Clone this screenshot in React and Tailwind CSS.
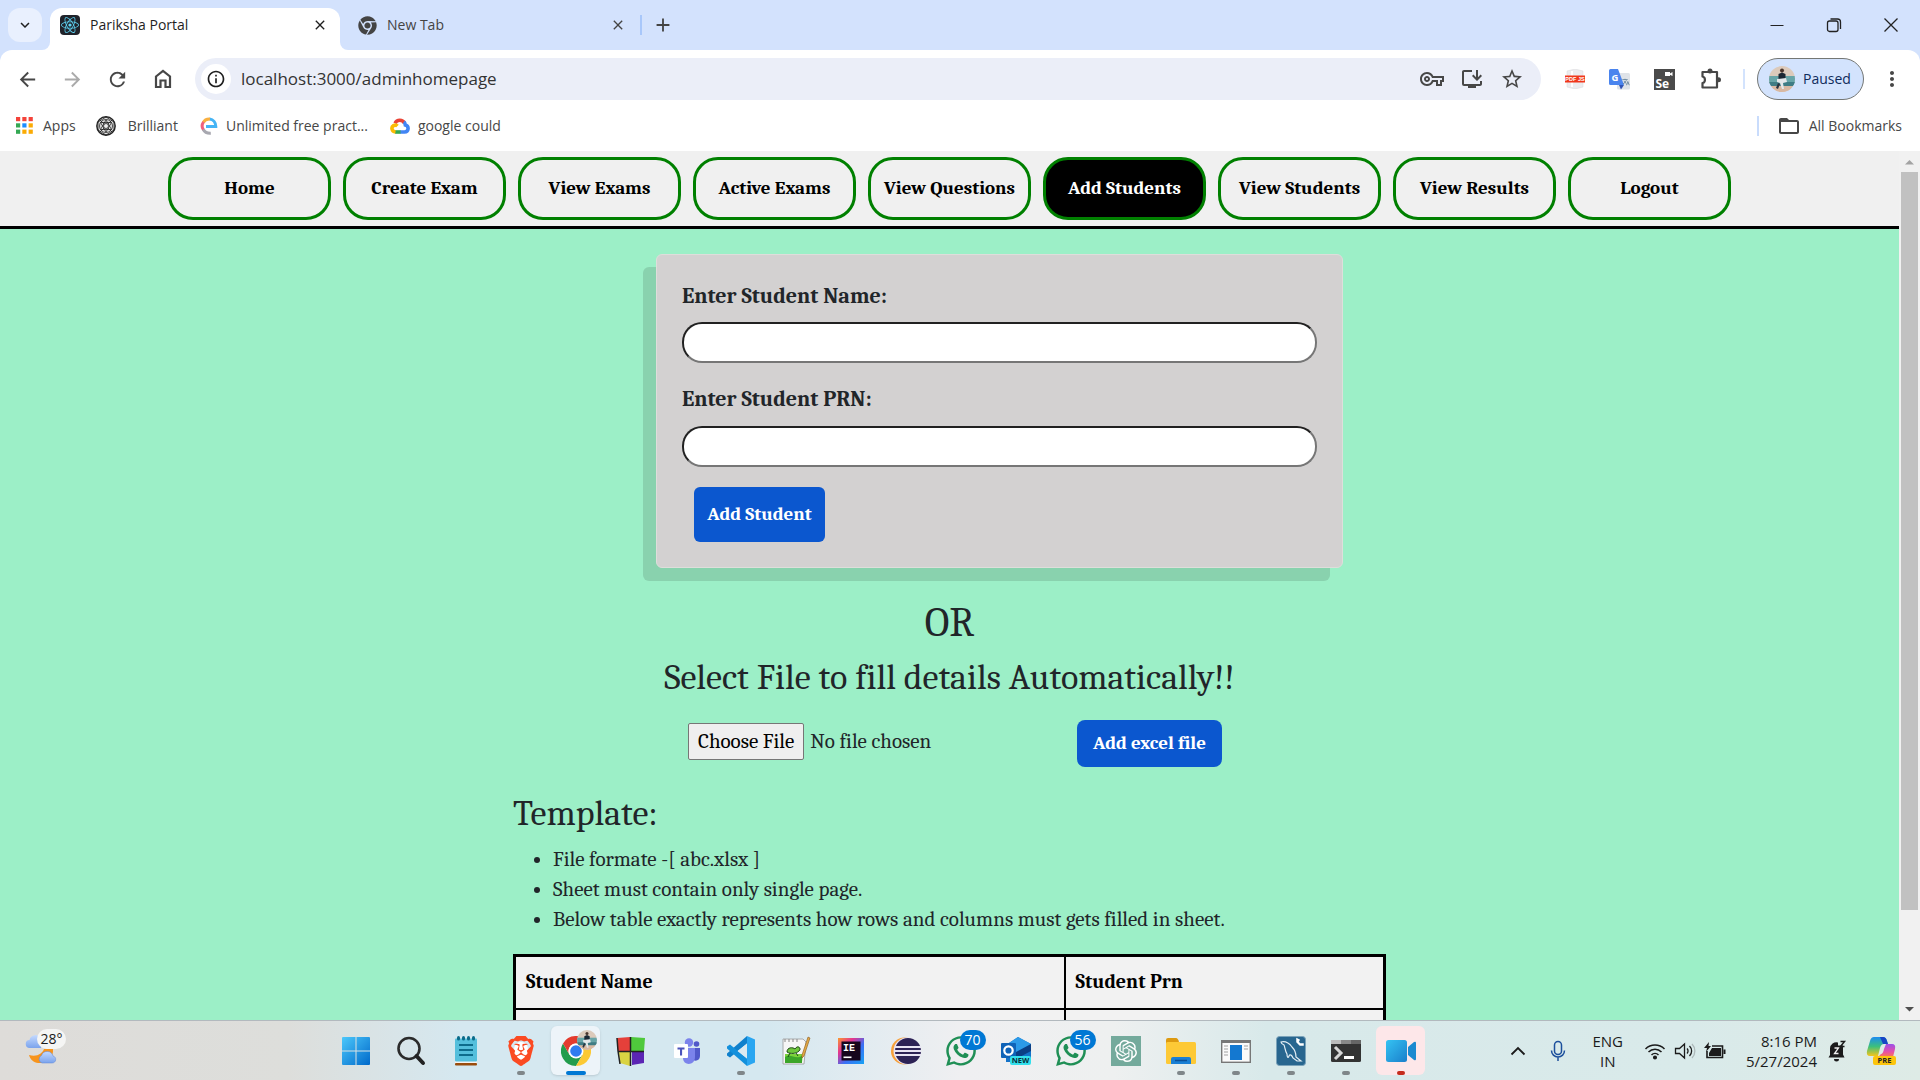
import React from "react";
import {
  MdOutlineVpnKey, MdInstallDesktop, MdStarBorder, MdArrowBack, MdArrowForward,
  MdRefresh, MdMoreVert, MdFolderOpen, MdInfoOutline, MdExpandMore, MdClose, MdAdd, MdTranslate,
} from "react-icons/md";
import { FaReact, FaWhatsapp, FaChrome } from "react-icons/fa";
import { SiBrave, SiOpenai } from "react-icons/si";

const HomeIcon = () => (
  <svg viewBox="0 0 24 24" className="size-6" fill="none" stroke="#474747" strokeWidth="2.2">
    <path d="M5 9.500 12 4l7 5.500V20h-4.500v-6.500h-5V20H5z" />
  </svg>
);

const PuzzleIcon = () => (
  <svg viewBox="0 0 24 24" className="size-6" fill="none" stroke="#474747" strokeWidth="2.2" strokeLinejoin="round">
    <path d="M3.500 5H18v15.500H3.500V16c3-.5 3.500-5.500 0-6.500z" />
    <circle cx="11" cy="4" r="2.500" fill="#474747" stroke="none" />
    <circle cx="19.500" cy="12.800" r="2.500" fill="#474747" stroke="none" />
  </svg>
);

const AppsIcon = () => (
  <svg viewBox="0 0 17 17" className="size-[17px]">
    {["#f4433a", "#f4433a", "#f4433a", "#34a853", "#1a8cff", "#fbab04", "#34a853", "#fbab04", "#fbab04"].map((c, i) => (
      <rect key={i} x={(i % 3) * 6.3} y={Math.floor(i / 3) * 6.3} width="4.2" height="4.2" fill={c} />
    ))}
  </svg>
);

const BrilliantIcon = () => (
  <svg viewBox="0 0 20 20" className="size-5" fill="none" stroke="#222" strokeWidth=".8">
    <circle cx="10" cy="10" r="9.2" fill="#e4e4e4" strokeWidth="1.4" />
    <circle cx="10" cy="10" r="6.5" />
    <path d="M10 1 18 6v8l-8 5-8-5V6zM10 4l5.500 9.500h-11zM10 16 4.500 6.500h11zM3.500 3.500l13 13M16.500 3.500l-13 13" />
    <circle cx="10" cy="10" r="2.500" fill="#eee" />
  </svg>
);

const EIcon = () => (
  <svg viewBox="0 0 18 20" className="h-5 w-[18px]" fill="none" strokeWidth="3">
    <path d="M6 10.500h9.800c0-4-2.500-7-6.300-7.500" stroke="#45b4f5" />
    <path d="M10 3C7 2.800 4.500 4 3.300 6.500" stroke="#f9b040" />
    <path d="M3.500 6A7 7 0 0 0 3.500 14" stroke="#f0607c" />
    <path d="M3.300 13.500c1.500 3 4 4 7.500 3.800" stroke="#a8a8b0" />
  </svg>
);

const CloudIcon = () => (
  <svg viewBox="0 0 20 16" className="h-4 w-5" fill="none" strokeWidth="3.6">
    <path d="M5 5.200A5.400 5.400 0 0 1 14.500 5" stroke="#ea4335" />
    <path d="M13.800 4c1.400 1 1.300 2 1.500 3 4 1 3.600 7-.8 7H10" stroke="#4285f4" />
    <path d="M10.500 14H5" stroke="#34a853" />
    <path d="M5.500 14C1.500 13.500 1 9 3.500 7.600c1.500-.8 3-.6 4 .4" stroke="#fbbc04" />
  </svg>
);

const PdfIcon = () => (
  <svg viewBox="0 0 20 20" className="size-5">
    <path d="M2 2 10 0l8 2v16l-8 2-8-2z" fill="#ececef" stroke="#d8d8da" strokeWidth=".5" />
    <path d="M7 2v16" stroke="#fff" strokeWidth="2" />
    <rect x="0" y="6.500" width="20" height="7" fill="#f0371c" />
    <text x="10" y="12.300" fontSize="5.500" fontWeight="bold" fill="#fff" textAnchor="middle" fontFamily="Liberation Sans, sans-serif">PDF JS</text>
  </svg>
);

const TranslateIcon = () => (
  <div className="relative size-[21px]">
    <svg viewBox="0 0 21 21" className="size-[21px]">
      <rect x="8" y="4" width="13" height="16.500" rx="1.500" fill="#dfe3e8" />
      <path d="M10 16h5l-3 4.500z" fill="#3254b5" />
      <path d="M1.500 0H9l6 16H1.500A1.500 1.500 0 0 1 0 14.500v-13A1.500 1.500 0 0 1 1.500 0z" fill="#4a84ee" />
      <text x="6" y="11.500" fontSize="9.500" fontWeight="bold" fill="#fff" textAnchor="middle" fontFamily="Open Sans, sans-serif">G</text>
    </svg>
    <MdTranslate className="absolute bottom-1 right-0 size-2 text-[#5d7d96]" />
  </div>
);

const SeIcon = () => (
  <svg viewBox="0 0 21 21" className="size-[21px]">
    <rect width="21" height="21" fill="#4a4a4a" />
    <text x="1.500" y="18.500" fontSize="12" fontWeight="bold" fill="#fff" fontFamily="Open Sans, sans-serif">Se</text>
    <path d="M11 3h5v1.500l2.500-1.500v4L16 5.800V7h-5z" fill="#fff" />
  </svg>
);

const Avatar = ({ className }) => (
  <svg viewBox="0 0 26 26" className={className}>
    <defs><clipPath id="avatarClip"><circle cx="13" cy="13" r="13" /></clipPath></defs>
    <g clipPath="url(#avatarClip)">
      <rect width="26" height="26" fill="#dccabb" />
      <rect y="10" width="26" height="9" fill="#68a5a8" />
      <path d="M0 16h26v4H0z" fill="#3f7d85" />
      <path d="M0 20h26v6H0z" fill="#d8b8a2" />
      <circle cx="13" cy="4.500" r="2" fill="#4a342b" />
      <path d="M9.500 8 13 6.500 16.500 8v6h-7z" fill="#1c2733" />
      <path d="m8 13 9-1 1 4-4 1 1 6h-2l-2-6-3-1z" fill="#e4e8ea" />
      <path d="m9 17 2 1-2 5-2-1z" fill="#2a3440" />
    </g>
  </svg>
);

const WeatherIcon = () => (
  <svg viewBox="0 0 32 32" className="size-8">
    <defs><linearGradient id="cloudFill" x1="0" y1="0" x2="0" y2="1"><stop offset="0" stopColor="#c3d9ff" /><stop offset="1" stopColor="#7ba3ec" /></linearGradient></defs>
    <path d="M5 13a4 4 0 0 1-.5-8A6 6 0 0 1 16 4v9z" fill="url(#cloudFill)" />
    <path d="M28 14c1 9-7 15-15 14C9 27.500 5 24.500 4 20c8 2 13-1 15-6z" fill="#f7941d" />
    <path d="M17 28a4 4 0 0 1-.5-7.500 6 6 0 0 1 11.500.5c4 1 3.500 7-1 7z" fill="url(#cloudFill)" stroke="#5d86d8" strokeWidth=".5" />
  </svg>
);

const S = ({ children, vb = "0 0 30 30" }) => <svg viewBox={vb} className="size-[30px]">{children}</svg>;

const WindowsIcon = () => (
  <S>
    <defs><linearGradient id="winFill" x1="0" y1="0" x2="1" y2="1"><stop offset="0" stopColor="#4cc8fb" /><stop offset="1" stopColor="#0069ca" /></linearGradient></defs>
    <path d="M2 1h12.500v13.500H1V2a1 1 0 0 1 1-1zM15.500 1H28a1 1 0 0 1 1 1v12.500H15.500zM1 15.500h13.500V29H2a1 1 0 0 1-1-1zM15.500 15.500H29V28a1 1 0 0 1-1 1H15.500z" fill="url(#winFill)" />
  </S>
);
const SearchIcon = () => (
  <S><circle cx="13" cy="12.500" r="10.500" fill="none" stroke="#2b2b2b" strokeWidth="2.600" /><path d="m20.500 20 6.500 7" stroke="#222" strokeWidth="4" strokeLinecap="round" /></S>
);
const NotepadIcon = () => (
  <S>
    <rect x="4" y="27" width="22" height="2.500" rx="1" fill="#9a4c0c" /><rect x="4" y="24" width="22" height="3" fill="#f3f3f3" />
    <rect x="4" y="2.500" width="22" height="23" rx="1" fill="#55bfdc" />
    <g stroke="#0e6c8c" strokeWidth="2"><path d="M8 9h14M8 14h14M8 19h14" /></g>
    {[7.5, 12.5, 17.5, 22.5].map((x) => <rect key={x} x={x - 1.5} y="0" width="3" height="4.500" rx="1.500" fill="#0b6b8a" />)}
  </S>
);
const BraveIcon = () => (
  <div className="relative">
    <span className="absolute inset-x-2 inset-y-1.5 rounded-full bg-white" />
    <SiBrave className="relative size-[30px] text-[#fb4a22]" />
  </div>
);
const ChromeIcon = () => (
  <div className="relative">
    <S vb="0 0 48 48">
      <path d="M13.600 30 3.200 12A24 24 0 0 0 24 48l10.400-18z" fill="#229c4c" />
      <path d="M34.400 30 24 48a24 24 0 0 0 20.800-36H24z" fill="#fcc934" />
      <path d="M44.800 12H24a12 12 0 0 0-10.400 18L3.200 12a24 24 0 0 1 41.600 0z" fill="#e33b2e" />
      <circle cx="24" cy="24" r="12" fill="#fff" /><circle cx="24" cy="24" r="9.300" fill="#2f7cf0" />
    </S>
    <Avatar className="absolute -right-1.5 -top-1.5 size-5" />
  </div>
);
const CubesIcon = () => (
  <S>
    <path d="m1 2 13-1v14H2z" fill="#e5403a" /><path d="m15 1 14 1-1 13H15z" fill="#4fc93c" />
    <path d="M3 16h11v14L4 27z" fill="#d9d343" /><path d="M16 16h12v11l-12 2z" fill="#5b25b4" />
    <path d="m1 2 1 13 2 13M14.500 1v29M2 15.500h26" stroke="#222" strokeWidth="1.500" fill="none" />
  </S>
);
const TeamsIcon = () => (
  <S>
    <circle cx="18" cy="6.500" r="4.200" fill="#7b83eb" /><circle cx="25.500" cy="8" r="2.800" fill="#5059c9" />
    <path d="M21 12h8v8c0 6-8 6-8 1z" fill="#5059c9" /><path d="M12 12h12v9c0 9-12 9-12 1z" fill="#7b83eb" />
    <rect x="3" y="8" width="14" height="14" rx="1" fill="#fff" />
    <path d="M6.500 11.500h7v2h-2.400v6H9v-6H6.500z" fill="#4b53bc" />
  </S>
);
const CodeIcon = () => (
  <S>
    <path d="m21 7.500-17 14-3-2v-2L21 0z" fill="#0f80cc" /><path d="M21 22.500 4 8.500l-3 2v2L21 30z" fill="#1390dc" />
    <path d="m21 0 8 3.500v23L21 30z" fill="#2aa6f1" /><path d="m21 7.500-9.500 7.500 9.500 7.500z" fill="#dbeaf1" />
  </S>
);
const NppIcon = () => (
  <S>
    <path d="M2 3h20l3 3-2 22H2z" fill="#f6f6f6" stroke="#999" strokeWidth=".8" />
    <path d="M4 18h18l-1 8H4z" fill="#7bd23c" /><path d="M4 21c6-4 10 3 17-1v7H4z" fill="#3ba629" />
    <path d="M6 16c0-5 6-5 8-3 3-5 7 0 4 2-3 3-9 3-12 1zm3 1-2 4m8-4 2 3" fill="#6fc73d" stroke="#1f4a18" strokeWidth="1" />
    <path d="m27 1 2 1-6 18-2 2v-3z" fill="#e3a844" stroke="#8a5a1c" strokeWidth=".6" />
    <path d="M4 3v3M8 3v3M12 3v3M16 3v3" stroke="#888" />
  </S>
);
const IdeaIcon = () => (
  <S>
    <defs><linearGradient id="ideaFill" x1="0" y1="0" x2="1" y2="1"><stop offset="0" stopColor="#fc9a2e" /><stop offset=".3" stopColor="#e4348f" /><stop offset=".6" stopColor="#3b6ff5" /><stop offset="1" stopColor="#17a3f4" /></linearGradient></defs>
    <rect x="2" y="2" width="26" height="26" fill="url(#ideaFill)" /><rect x="5.500" y="5.500" width="19" height="19" fill="#16061c" />
    <text x="7" y="15" fontSize="10" fontWeight="bold" fill="#fff" fontFamily="Liberation Mono, monospace">IE</text>
    <rect x="7.500" y="20.500" width="8" height="1.600" fill="#fff" />
  </S>
);
const EclipseIcon = () => (
  <S>
    <circle cx="13.500" cy="15" r="13.500" fill="#f7a13a" /><circle cx="16" cy="15" r="13.500" fill="#e8e3f3" /><circle cx="17" cy="15" r="13" fill="#2c2255" />
    <path d="M4 11h26M4 15h26M4 19h26" stroke="#e7e3f2" strokeWidth="1.800" />
  </S>
);
const Whatsapp = ({ count }) => (
  <div className="relative">
    <FaWhatsapp className="size-[34px] text-[#1f8f55]" />
    <span className="absolute -right-2 -top-1 flex h-5 w-[26px] items-center justify-center rounded-full bg-[#0078d4] text-sm text-white">{count}</span>
  </div>
);
const OutlookIcon = () => (
  <S>
    <path d="M5 9 17 1l13 7v18H5z" fill="#1473c9" /><path d="M5 9 17 1l13 7-14 9z" fill="#2c9ae8" /><path d="m15 16 15-8v7l-15 8z" fill="#0b3f85" />
    <rect x="0" y="7" width="15" height="15" rx="1" fill="#0f63b8" />
    <circle cx="7.500" cy="14.500" r="4.200" fill="none" stroke="#fff" strokeWidth="2.200" />
    <rect x="9" y="20" width="21" height="9" rx="2" fill="#33e0ec" />
    <text x="19.500" y="27.200" fontSize="7.500" fontWeight="bold" textAnchor="middle" fill="#06303c" fontFamily="Open Sans, sans-serif">NEW</text>
  </S>
);
const GptIcon = () => <div className="flex size-[30px] items-center justify-center bg-[#74aa9c]"><SiOpenai className="size-[22px] text-white" /></div>;
const ExplorerIcon = () => (
  <S>
    <path d="M0 4a2 2 0 0 1 2-2h8q2 0 3 4v3H0z" fill="#dd9a10" /><rect x="0" y="6" width="30" height="22" rx="1.500" fill="#fdc936" />
    <path d="M5 28v-5a2 2 0 0 1 2-2h16a2 2 0 0 1 2 2v5z" fill="#1a7fd4" /><path d="M9 24.500h12" stroke="#0b4f96" strokeWidth="1.500" />
  </S>
);
const PanelIcon = () => (
  <S>
    <rect x=".7" y="4.700" width="28.600" height="21.600" fill="#fafafa" stroke="#777" strokeWidth="1.400" /><rect x="0" y="4" width="30" height="3" fill="#777" />
    <g stroke="#a0a0a0"><path d="M3 10h4M3 13h4M3 16h4M3 19h4M23 10h4M23 13h4" /></g><rect x="9" y="9" width="12" height="15" fill="#1478d0" />
  </S>
);
const MysqlIcon = () => (
  <S>
    <rect x=".5" y=".5" width="29" height="29" rx="3" fill="#28668f" stroke="#7ba3ba" />
    <path d="M5 6c4-1 8 1 11 5 3 3 4 7 4 10l5 4h-4l-4-3c-1-3-3-4-4-2-1 3-2 1-2-2-2-3-2-7-3-9C6 8 5 7 5 6z" fill="none" stroke="#e3eef4" strokeWidth="1.200" />
    <path d="m21 3 2 1-1 2 2 2h3v1h-3l-3-3z" stroke="#fff" strokeWidth="1.500" fill="none" />
  </S>
);
const TerminalIcon = () => (
  <S>
    <rect x="0" y="4" width="30" height="22" rx="1.500" fill="#333" /><path d="M0 4h10v4H0z" fill="#bbb" /><path d="M10 4h10v4H10z" fill="#888" /><path d="M20 4h10v4H20z" fill="#666" />
    <path d="m4 11 6 6-6 6" stroke="#d8d8d8" strokeWidth="3" fill="none" /><path d="M13 21.500h10" stroke="#fff" strokeWidth="3" />
  </S>
);
const CameraIcon = () => (
  <S>
    <defs><linearGradient id="camFill" x1="0" y1="0" x2="1" y2="1"><stop offset="0" stopColor="#35c3f3" /><stop offset="1" stopColor="#1a7fcb" /></linearGradient></defs>
    <rect x="0" y="4" width="21" height="22" rx="2.500" fill="url(#camFill)" /><path d="m22 11 6-5q2-1 2 1v16q0 2-2 1l-6-5z" fill="#1b8ad0" />
  </S>
);

const tasks = [
  { name: "Start", icon: <WindowsIcon /> },
  { name: "Search", icon: <SearchIcon /> },
  { name: "Notepad", icon: <NotepadIcon /> },
  { name: "Brave", icon: <BraveIcon />, dot: "w-2 bg-[#7f8689]" },
  { name: "Chrome", icon: <ChromeIcon />, dot: "w-5 bg-[#0078d4]", bg: "bg-[#edf4f9] shadow-sm" },
  { name: "Blocks", icon: <CubesIcon /> },
  { name: "Teams", icon: <TeamsIcon /> },
  { name: "Code", icon: <CodeIcon />, dot: "w-2 bg-[#7f8689]" },
  { name: "Text editor", icon: <NppIcon /> },
  { name: "IDE", icon: <IdeaIcon /> },
  { name: "Eclipse", icon: <EclipseIcon /> },
  { name: "WhatsApp", icon: <Whatsapp count="70" /> },
  { name: "Outlook", icon: <OutlookIcon /> },
  { name: "WhatsApp Web", icon: <Whatsapp count="56" /> },
  { name: "ChatGPT", icon: <GptIcon /> },
  { name: "Explorer", icon: <ExplorerIcon />, dot: "w-2 bg-[#7f8689]" },
  { name: "Window", icon: <PanelIcon />, dot: "w-2 bg-[#7f8689]" },
  { name: "MySQL", icon: <MysqlIcon />, dot: "w-2 bg-[#7f8689]" },
  { name: "Terminal", icon: <TerminalIcon />, dot: "w-2 bg-[#7f8689]" },
  { name: "Recorder", icon: <CameraIcon />, dot: "w-2 bg-[#c42b1c]", bg: "bg-[#fde7e9]" },
];

const navItems = ["Home", "Create Exam", "View Exams", "Active Exams", "View Questions", "Add Students", "View Students", "View Results", "Logout"];

function TabStrip() {
  return (
    <div className="flex h-[50px] items-end bg-[#d3e2fd] text-sm text-[#1f1f1f]">
      <button aria-label="Search tabs" className="mb-2 ml-2 flex size-[34px] items-center justify-center rounded-xl bg-[#e9f0fe]">
        <MdExpandMore className="size-[18px]" />
      </button>
      <div className="size-2 rounded-br-lg shadow-[4px_4px_0_4px_white] [clip-path:inset(0)]" />
      <div className="flex h-[42px] w-[290px] items-center rounded-t-xl bg-white pb-2 pl-2.5 pr-3">
        <span className="flex size-5 items-center justify-center rounded-sm bg-[#20232a]"><FaReact className="size-[18px] text-[#5ed3f3]" /></span>
        <span className="ml-2.5 flex-1">Pariksha Portal</span>
        <button aria-label="Close Pariksha Portal"><MdClose className="size-4" /></button>
      </div>
      <div className="size-2 rounded-bl-lg shadow-[-4px_4px_0_4px_white] [clip-path:inset(0)]" />
      <div className="flex h-[42px] w-[278px] items-center pb-2 pl-2.5 text-[#444]">
        <FaChrome className="size-[19px]" />
        <span className="ml-2.5 flex-1">New Tab</span>
        <button aria-label="Close New Tab"><MdClose className="size-4" /></button>
      </div>
      <div className="mb-[15px] ml-3.5 h-5 w-0.5 bg-[#a8c7fa]" />
      <button aria-label="Open new tab" className="mb-3.5 ml-2.5"><MdAdd className="size-[22px] text-[#444]" /></button>
      <div className="mb-[17px] ml-auto flex items-center gap-[41px] pr-[21px] text-[#222]">
        <button aria-label="Minimise"><svg className="size-4" viewBox="0 0 16 16" stroke="currentColor"><path d="M1.500 8.500h13" /></svg></button>
        <button aria-label="Restore"><svg className="size-4" viewBox="0 0 16 16" fill="none" stroke="currentColor" strokeWidth="1.300"><rect x="1.500" y="4" width="10.500" height="10.500" rx="2" /><path d="M4.500 2h7a3 3 0 0 1 3 3v7" /></svg></button>
        <button aria-label="Close window"><svg className="size-4" viewBox="0 0 16 16" stroke="currentColor" strokeWidth="1.300"><path d="m1.500 1.500 13 13M14.500 1.500l-13 13" /></svg></button>
      </div>
    </div>
  );
}

function Toolbar() {
  return (
    <div className="flex h-[58px] items-center rounded-t-xl bg-white pl-4 text-[#474747]">
      <div className="flex items-center gap-[22px]">
        <button aria-label="Back"><MdArrowBack className="size-[23px]" /></button>
        <button aria-label="Forward"><MdArrowForward className="size-[23px] text-[#aaa]" /></button>
        <button aria-label="Reload"><MdRefresh className="size-[23px]" /></button>
        <button aria-label="Home"><HomeIcon /></button>
      </div>
      <div className="ml-5 flex h-[42px] flex-1 items-center rounded-full bg-[#ebeef8] pl-1.5 pr-[17px]">
        <span className="flex size-[30px] items-center justify-center rounded-full bg-white"><MdInfoOutline className="size-5 text-[#1f1f1f]" /></span>
        <input aria-label="Address" className="ml-2.5 flex-1 bg-transparent text-[17px] text-[#333] outline-none" defaultValue="localhost:3000/adminhomepage" />
        <div className="flex items-center gap-4">
          <button aria-label="Passwords"><MdOutlineVpnKey className="size-6" /></button>
          <button aria-label="Install"><MdInstallDesktop className="size-6" /></button>
          <button aria-label="Bookmark"><MdStarBorder className="size-6" /></button>
        </div>
      </div>
      <div className="ml-6 flex items-center gap-6">
        <PdfIcon /><TranslateIcon /><SeIcon />
        <button aria-label="Extensions"><PuzzleIcon /></button>
      </div>
      <div className="ml-5 h-5 w-0.5 bg-[#d3e3fd]" />
      <button className="ml-3 flex h-[42px] w-[107px] items-center gap-2 rounded-full border border-[#747775] bg-[#d3e3fd] pl-[11px] text-sm text-[#0f2c5c]">
        <Avatar className="size-[26px]" />Paused
      </button>
      <button aria-label="Menu" className="ml-4 mr-4"><MdMoreVert className="size-6" /></button>
    </div>
  );
}

function Bookmarks() {
  return (
    <div className="flex h-[43px] items-center bg-white pb-2 pl-4 pr-[18px] text-sm text-[#474747]">
      <a href="#apps" className="flex items-center gap-2.5"><AppsIcon />Apps</a>
      <a href="#brilliant" className="ml-5 flex items-center gap-3"><BrilliantIcon />Brilliant</a>
      <a href="#unlimited" className="ml-[22px] flex items-center gap-2"><EIcon />Unlimited free pract...</a>
      <a href="#cloud" className="ml-[22px] flex items-center gap-2"><CloudIcon />google could</a>
      <div className="ml-auto h-5 w-0.5 bg-[#c9dcfc]" />
      <a href="#all" className="ml-[18px] flex items-center gap-2"><MdFolderOpen className="size-6" />All Bookmarks</a>
    </div>
  );
}

function Page() {
  return (
    <div className="min-w-0 flex-1 overflow-hidden bg-[#9cefc7] font-[Cambria,Caladea,'Liberation_Serif',serif] text-[21px] text-[#212529]">
      <nav className="flex justify-center gap-3 border-b-3 border-black bg-[#f0f0f0] py-1.5">
        {navItems.map((n) => (
          <button key={n} className={`h-[63px] w-[163px] rounded-[25px] border-3 border-[#008000] text-[19px] font-bold ${n === "Add Students" ? "bg-black text-white" : "text-black"}`}>{n}</button>
        ))}
      </nav>
      <div className="flex justify-center pl-[100px] pt-[25px]">
        <form className="flex h-[314px] w-[687px] flex-col rounded-md border border-[#dededb] bg-[#d3d1d1] px-[25px] pt-[26px] shadow-[-13px_13px_0_rgba(0,0,0,0.12)]" onSubmit={(e) => e.preventDefault()}>
          <label htmlFor="name" className="text-[22px] font-bold leading-[30px]">Enter Student Name:</label>
          <input id="name" className="mt-[11px] h-[41px] rounded-[20px] border-2 border-b-[#767676] border-l-[#212121] border-r-[#767676] border-t-[#212121] bg-white px-4" />
          <label htmlFor="prn" className="mt-[21px] text-[22px] font-bold leading-[30px]">Enter Student PRN:</label>
          <input id="prn" className="mt-3 h-[41px] rounded-[20px] border-2 border-b-[#767676] border-l-[#212121] border-r-[#767676] border-t-[#212121] bg-white px-4" />
          <button className="ml-3 mt-5 h-[55px] w-[131px] rounded-md bg-[#0b57cf] text-[19px] font-bold text-white">Add Student</button>
        </form>
      </div>
      <h1 className="mt-[31px] text-center text-[41px] leading-[48px]">OR</h1>
      <h2 className="mt-1.5 text-center text-[36px] leading-[50px]">Select File to fill details Automatically!!</h2>
      <div className="mx-auto w-[873px]">
        <div className="mt-[17px] flex pl-[175px]">
          <input type="file" aria-label="Excel file" className="mt-[3px] h-[37px] w-[389px] file:mr-1.5 file:h-[37px] file:rounded-xs file:border file:border-solid file:border-[#767676] file:bg-[#efefef] file:px-[9px] file:text-black" />
          <button className="h-[47px] w-[145px] rounded-lg bg-[#0b57cf] text-[19px] font-bold text-white">Add excel file</button>
        </div>
        <h2 className="mt-[25px] text-[36px] leading-[43px]">Template:</h2>
        <ul className="mt-[9px] list-disc pl-10 leading-[30px]">
          <li>File formate -[ abc.xlsx ]</li>
          <li>Sheet must contain only single page.</li>
          <li>Below table exactly represents how rows and columns must gets filled in sheet.</li>
        </ul>
        <table className="mt-5 w-full table-fixed border-collapse border-3 border-black bg-[#f2f2f2] text-left text-black">
          <thead>
            <tr className="text-[20px]">
              <th className="h-[53px] w-[550px] border-2 border-black px-2.5">Student Name</th>
              <th className="border-2 border-black px-2.5">Student Prn</th>
            </tr>
          </thead>
          <tbody>
            <tr><td className="h-[53px] border-2 border-black" /><td className="border-2 border-black" /></tr>
          </tbody>
        </table>
      </div>
    </div>
  );
}

function Scrollbar() {
  return (
    <div className="flex w-[21px] flex-col items-center bg-[#f1f1f1]">
      <svg viewBox="0 0 21 21" className="size-[21px] shrink-0"><path d="M6 13.500 10.500 9l4.500 4.500z" fill="#a3a3a3" /></svg>
      <div className="w-[17px] flex-[738] bg-[#c1c1c1]" />
      <div className="flex-[89]" />
      <svg viewBox="0 0 21 21" className="size-[21px] shrink-0"><path d="M6 8l4.500 4.500L15 8z" fill="#505050" /></svg>
    </div>
  );
}

function Taskbar() {
  return (
    <footer className="flex h-[60px] items-center border-t border-[#b2b9be] bg-[linear-gradient(90deg,#dedcd9_0%,#dddedb_15%,#d5e8f0_24%,#d5e8f0_40%,#efeff1_50%,#eef0f0_58%,#d8e9ea_66%,#d9eaea_88%,#deebe6_100%)] text-[15px] text-[#1b1b1b]">
      <div className="flex w-[328px] shrink-0 items-center pl-[25px]">
        <div className="relative">
          <WeatherIcon />
          <span className="absolute -top-1.5 left-3 flex h-5 w-[29px] items-center justify-center rounded-full bg-[#f5f5f4] text-sm">28°</span>
        </div>
      </div>
      <div className="flex shrink-0">
        {tasks.map((t) => (
          <div key={t.name} className="flex w-[55px] justify-center">
            <button aria-label={t.name} className={`relative flex size-[49px] items-center justify-center rounded-md ${t.bg || ""}`}>
              {t.icon}
              {t.dot && <span className={`absolute bottom-0 left-1/2 h-1 -translate-x-1/2 rounded-full ${t.dot}`} />}
            </button>
          </div>
        ))}
      </div>
      <div className="flex flex-1 items-center justify-end pr-6 leading-5">
        <svg viewBox="0 0 16 16" className="size-4" fill="none" stroke="#1b1b1b" strokeWidth="1.800"><path d="m1.500 11.500 6.500-6.500 6.500 6.500" /></svg>
        <svg viewBox="0 0 16 22" className="ml-6 h-[22px] w-4" fill="none" stroke="#1c4f9c" strokeWidth="1.500"><rect x="4.500" y="1.500" width="7" height="13" rx="3.500" /><path d="M1.500 10.500a6.500 6.500 0 0 0 13 0M8 17v4" /></svg>
        <div className="ml-[26px] text-center"><div>ENG</div><div>IN</div></div>
        <svg viewBox="0 0 22 18" className="ml-[21px] h-[18px] w-[22px]" fill="none" stroke="#1b1b1b" strokeWidth="1.500"><path d="M1.500 7a13.500 13.500 0 0 1 19 0M4.500 10a9 9 0 0 1 13 0M7.500 13a5 5 0 0 1 7 0" /><circle cx="11" cy="15.500" r="1.300" fill="#1b1b1b" /></svg>
        <svg viewBox="0 0 22 18" className="ml-2 h-[18px] w-[22px]" fill="none" stroke="#1b1b1b" strokeWidth="1.300"><path d="M1.500 6.500h4l5-4.500v14l-5-4.500h-4zM13 6.500a3.500 3.500 0 0 1 0 5M15.500 4a7 7 0 0 1 0 10" /><path d="M18 2a10 10 0 0 1 0 14" stroke="#aeb9ba" /></svg>
        <svg viewBox="0 0 22 18" className="ml-2 h-[18px] w-[22px]"><path d="M8 4h10.500v11.500H3V9" fill="none" stroke="#1b1b1b" strokeWidth="1.600" /><path d="M8 6h9v8H5v-3z" fill="#1b1b1b" /><path d="M19.500 7.500h2v4.500h-2zM5 0 0 6h3L2 10l5-6H4.500z" fill="#1b1b1b" /></svg>
        <div className="ml-5 text-right"><div>8:16 PM</div><div>5/27/2024</div></div>
        <svg viewBox="0 0 20 22" className="ml-2.5 h-[22px] w-5"><path d="M3 15V8.500a6.500 6.500 0 0 1 8-6v3h5v9l1.500 3H1.500zM7 19h5a2.500 2.500 0 0 1-5 0z" fill="#1b1b1b" /><path d="M7.500 8h4l-4 5.500h4" fill="none" stroke="#eee" strokeWidth="1.300" /><path d="M13.500 1.500h4l-4 5h4" fill="none" stroke="#1b1b1b" strokeWidth="1.500" /></svg>
        <svg viewBox="0 0 30 30" className="ml-[19px] size-[30px]">
          <defs>
            <linearGradient id="cpLeft" x1="0" y1="0" x2="0" y2="1"><stop offset="0" stopColor="#1d8cf0" /><stop offset=".5" stopColor="#3cc07c" /><stop offset="1" stopColor="#f5c51b" /></linearGradient>
            <linearGradient id="cpRight" x1="0" y1="0" x2="0" y2="1"><stop offset="0" stopColor="#9b50e8" /><stop offset=".6" stopColor="#e74fa8" /><stop offset="1" stopColor="#fb7a4a" /></linearGradient>
          </defs>
          <path d="M8 1h9q3 0 4 4l1 3h-4q-3 0-4 4l-2 8H4q-4 0-3-5L4 5q1-4 4-4z" fill="url(#cpLeft)" />
          <path d="M14 1h3q3 0 4 4l1 3h-5z" fill="#1746c4" />
          <path d="M20 8h6q4 0 3 5l-2 8H12l3-3q2 0 3-5z" fill="url(#cpRight)" />
          <rect x="7" y="20" width="23" height="9" rx="2" fill="#fcc50c" />
          <text x="18.500" y="27.200" fontSize="7.500" fontWeight="bold" textAnchor="middle" fill="#222" fontFamily="Open Sans, sans-serif">PRE</text>
        </svg>
      </div>
    </footer>
  );
}

export default function App() {
  return (
    <div className="flex h-screen flex-col overflow-hidden bg-[#d3e2fd] font-['Open_Sans','Noto_Sans',sans-serif]">
      <TabStrip />
      <Toolbar />
      <Bookmarks />
      <main className="flex min-h-0 flex-1">
        <Page />
        <Scrollbar />
      </main>
      <Taskbar />
    </div>
  );
}
